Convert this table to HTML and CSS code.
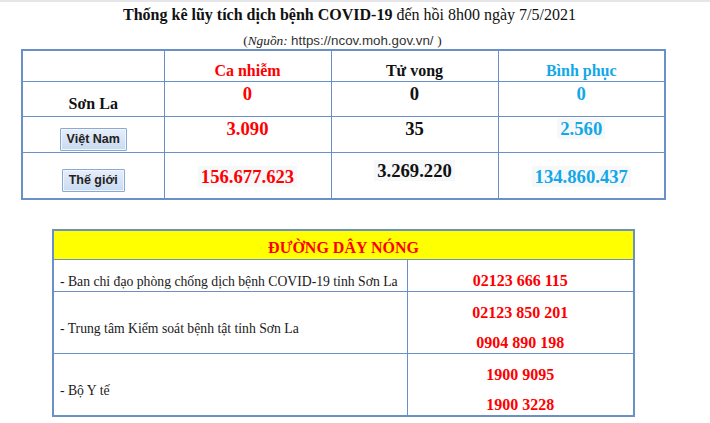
FILE: index.html
```html
<!DOCTYPE html>
<html lang="vi">
<head>
<meta charset="utf-8">
<link rel="stylesheet" href="styles.css">
</head>
<body>
<div class="page">
  <h1 class="title"><b>Thống kê lũy tích dịch bệnh COVID-19</b> đến hồi 8h00 ngày 7/5/2021</h1>
  <p class="source">(<i>Nguồn:</i> <span class="url">https://ncov.moh.gov.vn/ </span>)</p>

  <table class="stats">
    <colgroup><col class="c1"><col class="c2"><col class="c3"><col class="c4"></colgroup>
    <tr class="r1">
      <td></td>
      <td class="head red">Ca nhiễm</td>
      <td class="head">Tử vong</td>
      <td class="head blue">Bình phục</td>
    </tr>
    <tr class="r2">
      <td class="label">Sơn La</td>
      <td class="val red">0</td>
      <td class="val">0</td>
      <td class="val blue">0</td>
    </tr>
    <tr class="r3">
      <td class="btncell"><span class="btn">Việt Nam</span></td>
      <td class="val red">3.090</td>
      <td class="val">35</td>
      <td class="val blue"><span class="hl">2.560</span></td>
    </tr>
    <tr class="r4">
      <td class="btncell b2"><span class="btn">Thế giới</span></td>
      <td class="val big red"><span class="hl">156.677.623</span></td>
      <td class="val mid"><span class="hl">3.269.220</span></td>
      <td class="val big blue"><span class="hl">134.860.437</span></td>
    </tr>
  </table>

  <table class="hotline">
    <colgroup><col class="h1"><col class="h2"></colgroup>
    <tr>
      <td class="hothead" colspan="2">ĐƯỜNG DÂY NÓNG</td>
    </tr>
    <tr>
      <td class="org">- Ban chỉ đạo phòng chống dịch bệnh COVID-19 tỉnh Sơn La</td>
      <td class="phones"><p>02123 666 115</p></td>
    </tr>
    <tr>
      <td class="org">- Trung tâm Kiểm soát bệnh tật tỉnh Sơn La</td>
      <td class="phones"><p>02123 850 201</p><p>0904 890 198</p></td>
    </tr>
    <tr>
      <td class="org">- Bộ Y tế</td>
      <td class="phones"><p>1900 9095</p><p>1900 3228</p></td>
    </tr>
  </table>
</div>
</body>
</html>
```

FILE: styles.css
```css
html, body {
  margin: 0;
  padding: 0;
  background: #ffffff;
}
body {
  border-top: 2px solid #e6e6ea;
  font-family: "Liberation Serif", "Times New Roman", serif;
  color: #111;
}
.page {
  width: 643px;
  margin-left: 21px;
}
.title {
  margin: 0;
  padding: 4px 0 0 14px;
  height: 24px;
  font-size: 16px;
  line-height: 18px;
  font-weight: normal;
  text-align: center;
  color: #111;
}
.title b {
  font-weight: bold;
}
.source {
  margin: 0;
  height: 19px;
  font-size: 13.33px;
  line-height: 22px;
  text-align: center;
  color: #222;
}
.source i {
  font-style: italic;
}
.url {
  font-family: "Liberation Sans", Arial, sans-serif;
  color: #333;
}
table {
  border-collapse: collapse;
  table-layout: fixed;
}
.stats {
  width: 643px;
  border: 2px solid #6a90c8;
}
.stats td {
  border: 1px solid #6a90c8;
  padding: 0;
  text-align: center;
  font-weight: bold;
}
col.c1 { width: 142px; }
col.c2, col.c3, col.c4 { width: 167px; }
.stats tr.r1 { height: 31px; }
.stats tr.r2 { height: 35px; }
.stats tr.r3 { height: 36px; }
.stats tr.r4 { height: 47px; }
.head {
  font-size: 16px;
  line-height: 18px;
  vertical-align: bottom;
  padding-bottom: 1px !important;
}
.label {
  font-size: 16px;
  line-height: 18px;
  vertical-align: bottom;
  padding-bottom: 3px !important;
}
.val {
  font-size: 18.67px;
  line-height: 21px;
  vertical-align: top;
  padding-top: 1px !important;
}
.val.big { padding-top: 13px !important; }
.val.mid { padding-top: 7px !important; }
.red { color: #ff0000; }
.blue { color: #12a8e8; }
.hl {
  background: #f7f8fa;
  padding: 0 3px;
}
.btncell {
  vertical-align: bottom;
  padding-bottom: 1px !important;
}
.btncell.b2 {
  padding-bottom: 6px !important;
}
.btn {
  display: inline-block;
  box-sizing: border-box;
  height: 23px;
  padding: 0 6px;
  border: 1px solid #8aaad6;
  border-radius: 1px;
  background: linear-gradient(#e6eefa, #c8daf1);
  box-shadow: inset 0 0 0 1px #f2f6fc;
  font-family: "Liberation Sans", Arial, sans-serif;
  font-size: 12.5px;
  line-height: 21px;
  font-weight: bold;
  color: #222;
}
.hotline {
  width: 581px;
  margin: 29px 0 0 31px;
  border: 2px solid #6a90c8;
}
.hotline td {
  border: 1px solid #6a90c8;
  padding: 0;
}
col.h1 { width: 354px; }
col.h2 { width: 227px; }
.hothead {
  background: #ffff00;
  height: 26px;
  color: #ff0000;
  font-weight: bold;
  font-size: 16px;
  line-height: 18px;
  text-align: center;
  vertical-align: bottom;
  padding-bottom: 2px !important;
}
.org {
  font-size: 13.7px;
  line-height: 17px;
  vertical-align: middle;
  white-space: nowrap;
  padding: 11px 0 0 6px !important;
  color: #1a1a1a;
}
.phones {
  text-align: center;
  vertical-align: top;
  padding-bottom: 1px !important;
}
.phones p {
  margin: 12px 0 0;
  font-size: 16px;
  line-height: 18px;
  font-weight: bold;
  color: #ff0000;
}
```
